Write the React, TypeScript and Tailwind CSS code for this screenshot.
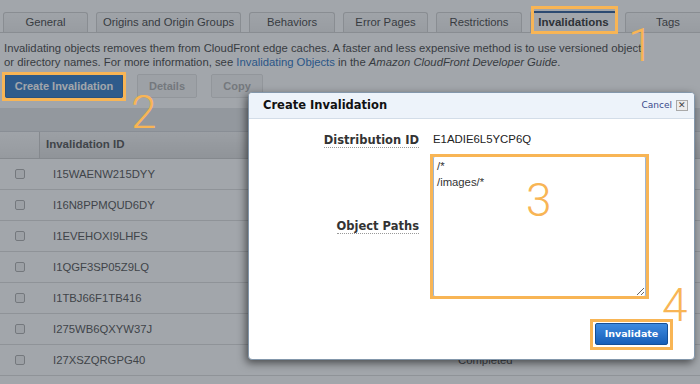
import React from "react";

const tabs = [
  { label: "General", w: "w-[85px]" },
  { label: "Origins and Origin Groups", w: "w-[145px]" },
  { label: "Behaviors", w: "w-[86px]" },
  { label: "Error Pages", w: "w-[85px]" },
  { label: "Restrictions", w: "w-[86px]" },
  { label: "Invalidations", w: "w-[87px]", active: true },
  { label: "Tags", w: "w-[86px]" },
];

const rows = [
  "I15WAENW215DYY",
  "I16N8PPMQUD6DY",
  "I1EVEHOXI9LHFS",
  "I1QGF3SP05Z9LQ",
  "I1TBJ66F1TB416",
  "I275WB6QXYW37J",
  "I27XSZQRGPG40",
];

const App: React.FC = () => {
  return (
    <div className="relative w-[700px] h-[384px] overflow-hidden bg-white text-[#333] font-['Liberation_Sans',Arial,sans-serif]">
      {/* Tabs */}
      <div className="flex items-end gap-[8px] pl-[3px] h-[33px] border-b border-[#cfcfcf]">
        {tabs.map((t) =>
          t.active ? (
            <div
              key={t.label}
              className={`${t.w} shrink-0 h-[22px] -mb-px bg-white border-t-2 border-x border-t-[#1d4f91] border-x-[#cfcfcf] rounded-t-[3px] flex items-center justify-center text-[11.5px] font-bold text-[#222]`}
            >
              {t.label}
            </div>
          ) : (
            <div
              key={t.label}
              className={`${t.w} shrink-0 h-[20px] bg-gradient-to-b from-[#fafafa] to-[#ececec] border border-b-0 border-[#cfcfcf] rounded-t-[3px] flex items-center justify-center text-[11.3px] text-[#333]`}
            >
              {t.label}
            </div>
          )
        )}
      </div>

      {/* Description */}
      <div className="pl-[4px] pt-[8px] text-[11.3px] leading-[14px] whitespace-nowrap">
        <div>
          Invalidating objects removes them from CloudFront edge caches. A faster and less expensive method is to use versioned object
        </div>
        <div>
          or directory names. For more information, see{" "}
          <span className="text-[#1166bb]">Invalidating Objects</span> in the{" "}
          <i>Amazon CloudFront Developer Guide</i>.
        </div>
      </div>

      {/* Buttons */}
      <div className="flex items-center gap-[14px] pl-[5px] mt-[5px] h-[24px]">
        <div className="w-[118px] h-[24px] rounded-[2px] bg-[#2170c1] border border-[#1b5ea6] text-white text-[11px] font-bold flex items-center justify-center">
          Create Invalidation
        </div>
        <div className="w-[60px] h-[24px] rounded-[2px] bg-[#f6f6f6] border border-[#e0e0e0] text-[#a8a8a8] text-[11px] font-bold flex items-center justify-center">
          Details
        </div>
        <div className="w-[52px] h-[24px] rounded-[2px] bg-[#f6f6f6] border border-[#e0e0e0] text-[#a8a8a8] text-[11px] font-bold flex items-center justify-center">
          Copy
        </div>
      </div>

      {/* Table */}
      <div className="mt-[10px]">
        <div className="h-[24px] bg-[#e3e5e7] border-b border-[#cfd2d5]" />
        <div className="flex h-[27px] border-b border-[#c8c8c8] bg-gradient-to-b from-[#f3f3f3] to-[#dcdcdc]">
          <div className="w-[40px] border-r border-[#c8c8c8] bg-gradient-to-b from-[#fbfbfb] to-[#e8e8e8]" />
          <div className="pl-[6px] flex items-center text-[11.5px] font-bold text-[#444]">Invalidation ID</div>
        </div>
        {rows.map((id) => (
          <div key={id} className="flex items-center h-[31px] border-b border-[#dadada]">
            <div className="w-[40px] flex justify-center">
              <div className="w-[10px] h-[10px] rounded-[2px] border border-[#a8a8a8] bg-[#f4f4f4]" />
            </div>
            <div className="w-[418px] pl-[13px] text-[11.3px] text-[#444]">{id}</div>
            <div className="text-[11.3px] text-[#444]">Completed</div>
          </div>
        ))}
      </div>

      {/* Modal overlay */}
      <div className="absolute inset-0 bg-[rgba(60,70,80,0.48)]" />

      {/* Modal */}
      <div className="absolute left-[248px] top-[92px] w-[447px] h-[268px] bg-white rounded-[4px] border border-[#8397ab] shadow-[-2px_3px_8px_rgba(0,0,0,0.55)] overflow-hidden">
        <div className="h-[26px] bg-[#edf3fa] border-b border-[#d3dde8] flex items-center justify-between pl-[14px] pr-[6px]">
          <div className="font-['DejaVu_Sans',Verdana,sans-serif] font-bold text-[11.5px] text-[#111]">
            Create Invalidation
          </div>
          <div className="flex items-center gap-[4px]">
            <span className="text-[9px] text-[#3a4a8c] font-['DejaVu_Sans',Verdana,sans-serif]">Cancel</span>
            <span className="w-[12px] h-[11px] border border-[#a9a9a9] bg-[#ececec] flex items-center justify-center text-[9px] leading-none text-[#444]">
              ✕
            </span>
          </div>
        </div>

        <div className="grid grid-cols-[170px_1fr] gap-x-[14px] pt-[13px]">
          <div className="flex justify-end items-center h-[16px]">
            <span className="font-['DejaVu_Sans',Verdana,sans-serif] font-bold text-[11.5px] text-[#333] border-b border-dotted border-[#999] leading-[14px]">
              Distribution ID
            </span>
          </div>
          <div className="flex items-center h-[16px] text-[11.4px] text-[#222]">E1ADIE6L5YCP6Q</div>

          <div className="flex justify-end items-center mt-[8px]">
            <span className="font-['DejaVu_Sans',Verdana,sans-serif] font-bold text-[11.5px] text-[#333] border-b border-dotted border-[#999] leading-[14px]">
              Object Paths
            </span>
          </div>
          <div className="mt-[8px]">
            <textarea
              readOnly
              value={"/*\n/images/*"}
              className="block w-[213px] h-[141px] border border-[#9fb6d0] rounded-[2px] px-[3px] pt-[1px] text-[11.3px] leading-[16px] text-[#333] font-['Liberation_Sans',Arial,sans-serif] resize outline-none"
            />
          </div>
        </div>

        <div className="flex justify-end pr-[26px] mt-[26px]">
          <div className="w-[73px] h-[22px] rounded-[2px] bg-gradient-to-b from-[#3d8ae0] to-[#175fb8] border border-[#154f96] text-white font-['DejaVu_Sans',Verdana,sans-serif] font-bold text-[9.5px] flex items-center justify-center">
            Invalidate
          </div>
        </div>
      </div>

      {/* Annotations */}
      <div className="absolute left-[531px] top-[6px] w-[87px] h-[28px] border-[3px] border-[#f8b555]" />
      <div className="absolute left-[2px] top-[72px] w-[124px] h-[29px] border-[3px] border-[#f8b555]" />
      <div className="absolute left-[430px] top-[154px] w-[219px] h-[145px] border-[3px] border-[#f8b555]" />
      <div className="absolute left-[590px] top-[319px] w-[83px] h-[31px] border-[3px] border-[#f8b555]" />

      <div className="absolute left-[628px] top-[22px] text-[46px] leading-none font-light text-[#f8b555] font-['Roboto',sans-serif]">1</div>
      <div className="absolute left-[131px] top-[89px] text-[46px] leading-none font-light text-[#f8b555] font-['Roboto',sans-serif]">2</div>
      <div className="absolute left-[526px] top-[177px] text-[46px] leading-none font-light text-[#f8b555] font-['Roboto',sans-serif]">3</div>
      <div className="absolute left-[662px] top-[282px] text-[46px] leading-none font-light text-[#f8b555] font-['Roboto',sans-serif]">4</div>
    </div>
  );
};

export default App;
